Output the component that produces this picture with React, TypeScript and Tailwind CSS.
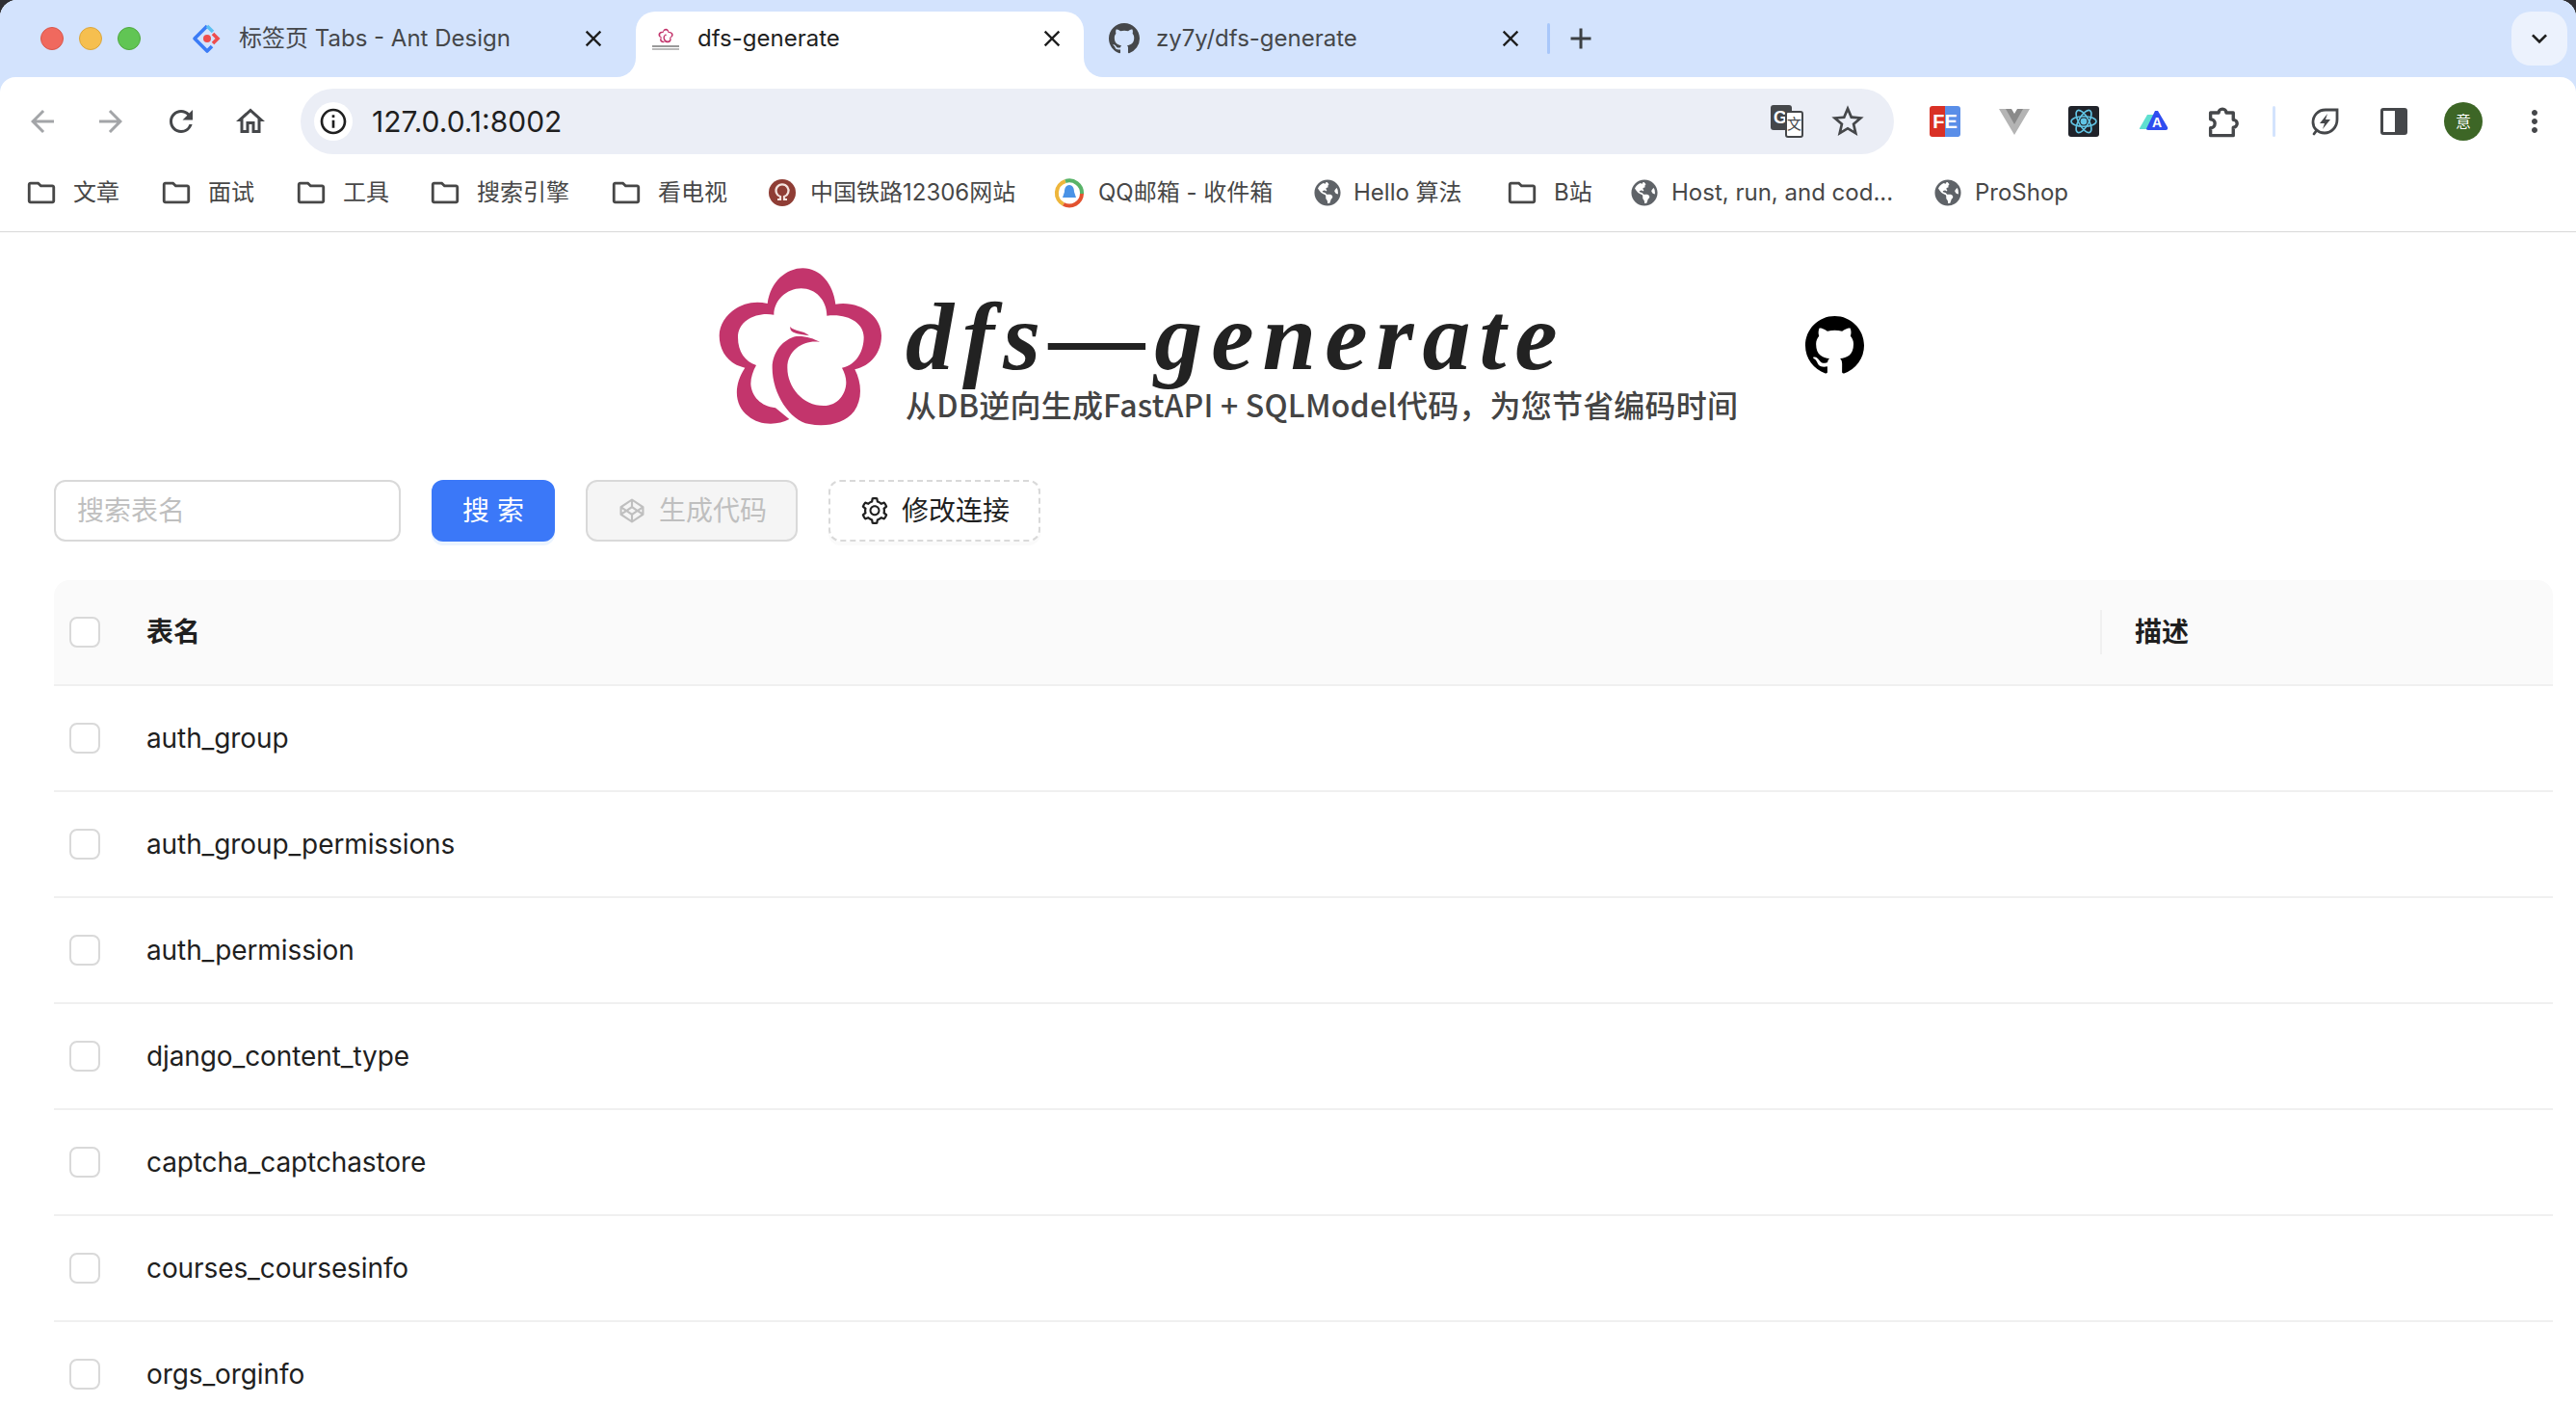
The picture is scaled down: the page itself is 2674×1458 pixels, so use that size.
import { AiOutlineCodepen, AiOutlineSetting } from 'react-icons/ai'
import { FaGlobeAmericas } from 'react-icons/fa'
import {
  MdAdd,
  MdArrowBack,
  MdArrowForward,
  MdClose,
  MdInfoOutline,
  MdKeyboardArrowDown,
  MdMoreVert,
  MdOutlineFolder,
  MdOutlineHome,
  MdRefresh,
  MdStarBorder,
} from 'react-icons/md'

const SANS = 'font-["Inter","Noto_Sans_CJK_SC",sans-serif]'

const TABLES = [
  'auth_group',
  'auth_group_permissions',
  'auth_permission',
  'django_content_type',
  'captcha_captchastore',
  'courses_coursesinfo',
  'orgs_orginfo',
]

function Flower({ className }: { className?: string }) {
  return (
    <svg viewBox="0 0 600 570" className={className}>
      <path
        fill="#c3356c"
        d="M268 510C230 530 175 530 140 500C100 470 90 410 130 350C80 340 50 300 50 250C50 190 120 130 200 150C210 80 260 40 310 40C365 40 405 90 412 152C490 140 555 190 555 250C555 305 520 345 472 355C495 400 495 450 470 485C440 525 380 535 330 525C270 515 215 430 215 350C215 300 250 260 290 252C315 250 345 258 363 270C320 262 262 290 262 350C262 410 310 468 375 468C420 468 445 430 445 395C445 380 440 365 432 350C480 340 500 295 500 255C500 210 450 180 385 188C385 140 350 103 305 103C260 103 220 140 220 185C170 175 108 200 108 255C108 300 130 330 165 342C155 360 148 380 148 400C150 440 180 470 225 475Z"
      />
      <path fill="#c3356c" d="M270 222C285 238 310 232 330 250C300 245 280 245 272 232Z" />
    </svg>
  )
}

function GithubMark({ className }: { className?: string }) {
  return (
    <svg viewBox="0 0 16 16" className={className} fill="currentColor">
      <path d="M8 0C3.58 0 0 3.58 0 8c0 3.54 2.29 6.53 5.47 7.59.4.07.55-.17.55-.38 0-.19-.01-.82-.01-1.49-2.01.37-2.53-.49-2.69-.94-.09-.23-.48-.94-.82-1.13-.28-.15-.68-.52-.01-.53.63-.01 1.08.58 1.23.82.72 1.21 1.87.87 2.33.66.07-.52.28-.87.51-1.07-1.78-.2-3.64-.89-3.64-3.95 0-.87.31-1.59.82-2.15-.08-.2-.36-1.02.08-2.12 0 0 .67-.21 2.2.82.64-.18 1.32-.27 2-.27.68 0 1.36.09 2 .27 1.53-1.04 2.2-.82 2.2-.82.44 1.1.16 1.92.08 2.12.51.56.82 1.27.82 2.15 0 3.07-1.87 3.75-3.65 3.95.29.25.54.73.54 1.48 0 1.07-.01 1.93-.01 2.2 0 .21.15.46.55.38A8.013 8.013 0 0016 8c0-4.42-3.58-8-8-8z" />
    </svg>
  )
}

function AntLogo() {
  return (
    <svg viewBox="0 0 32 32" className="size-8 shrink-0" fill="none">
      <path d="M16 3L3 16l13 13 5-5" stroke="#3b7cf6" strokeWidth="3.6" strokeLinejoin="round" />
      <path d="M16 3l6 6" stroke="#5cc0f2" strokeWidth="3.6" />
      <path d="M22 11l5 5-5 5" stroke="#ee4d4d" strokeWidth="3.6" />
      <circle cx="16" cy="16" r="4" fill="#ee4d4d" />
    </svg>
  )
}

function Tab({
  icon,
  title,
  box,
  active,
}: {
  icon: React.ReactNode
  title: string
  box: string
  active?: boolean
}) {
  return (
    <div
      className={`relative flex h-[68px] shrink-0 items-center pb-3 ${box} ${
        active ? 'rounded-t-[20px] bg-white text-[#1f1f1f]' : 'text-[#45474a]'
      }`}
    >
      {active && (
        <>
          <span className="absolute -left-5 bottom-0 size-5 bg-white">
            <span className="block size-5 rounded-br-[20px] bg-[#d3e3fd]" />
          </span>
          <span className="absolute -right-5 bottom-0 size-5 bg-white">
            <span className="block size-5 rounded-bl-[20px] bg-[#d3e3fd]" />
          </span>
        </>
      )}
      <span className="flex w-8 shrink-0 justify-center">{icon}</span>
      <span className="ml-[17px] min-w-0 flex-1 truncate text-[24px]">{title}</span>
      <MdClose className="size-7 shrink-0 text-[#1f1f1f]" />
    </div>
  )
}

function TabStrip() {
  return (
    <div className="flex h-20 items-end bg-[#d3e3fd]">
      <div className="flex h-20 w-[184px] shrink-0 items-center gap-4 pl-[42px]">
        <span className="size-6 rounded-full border border-[#d9574b] bg-[#f0695e]" />
        <span className="size-6 rounded-full border border-[#dba63c] bg-[#f6bf4f]" />
        <span className="size-6 rounded-full border border-[#4fa83e] bg-[#61c554]" />
      </div>
      <Tab icon={<AntLogo />} title="标签页 Tabs - Ant Design" box="w-[476px] pl-[15px] pr-[30px]" />
      <Tab
        active
        icon={
          <span className="flex flex-col items-center">
            <Flower className="size-[18px]" />
            <span className="mt-px h-[2px] w-7 bg-[#999]" />
            <span className="mt-px h-[2px] w-7 bg-[#bbb]" />
          </span>
        }
        title="dfs-generate"
        box="w-[465px] pl-[15px] pr-[19px]"
      />
      <Tab icon={<GithubMark className="size-8" />} title="zy7y/dfs-generate" box="w-[475px] pl-[26px] pr-[18px]" />
      <div className="flex h-20 flex-1 items-center pl-[6px]">
        <span className="h-[32px] w-[3px] rounded bg-[#a8c7fa]" />
        <MdAdd className="ml-[14px] size-9 text-[#3c4043]" />
        <span className="ml-auto mr-[9px] flex h-14 w-[58px] items-center justify-center rounded-[20px] bg-[#ecf2fd]">
          <MdKeyboardArrowDown className="size-8 text-[#1f1f1f]" />
        </span>
      </div>
    </div>
  )
}

function ExtensionIcons() {
  return (
    <div className="flex items-center">
      <span className="flex size-8 items-center justify-center rounded-[3px] bg-[linear-gradient(90deg,#d93025_50%,#5a8ee8_50%)] font-['Liberation_Sans',sans-serif] text-[20px] font-bold leading-none text-white">
        FE
      </span>
      <svg viewBox="0 0 32 28" className="ml-10 size-8">
        <path fill="#b4b4b4" d="M0 1h12l4 7 4-7h12L16 28z" />
        <path fill="#8a8a8a" d="M7 1h6l3 5 3-5h6L16 17z" />
      </svg>
      <span className="ml-10 flex size-8 items-center justify-center rounded-[3px] bg-[#20232a]">
        <svg viewBox="0 0 32 32" className="size-8" fill="none" stroke="#61c4e4" strokeWidth="1.6">
          <ellipse cx="16" cy="16" rx="13" ry="5.2" />
          <ellipse cx="16" cy="16" rx="13" ry="5.2" transform="rotate(60 16 16)" />
          <ellipse cx="16" cy="16" rx="13" ry="5.2" transform="rotate(120 16 16)" />
          <circle cx="16" cy="16" r="2.6" fill="#61c4e4" />
        </svg>
      </span>
      <svg viewBox="0 0 32 32" className="ml-10 size-8">
        <path fill="#5fdfd0" d="M2 23 10 9h7v15H5C2 24 1.500 24 2 23z" />
        <path fill="#2f4df0" d="M18 5h3l10 17c.7 1.500 0 3-2 3H11C9 25 8.500 24 9.500 22.500z" />
        <text x="20" y="22" fontSize="14" fontWeight="700" fill="#fff" textAnchor="middle" fontFamily="Liberation Sans">
          A
        </text>
      </svg>
      <svg viewBox="0 0 32 32" className="ml-[38px] size-9" fill="none" stroke="#45474a" strokeWidth="3" strokeLinejoin="round">
        <path d="M5 8h7.500a3.500 3.500 0 0 1 7 0H26v6.500a3.500 3.500 0 0 1 0 7V29H5v-7a4 4 0 0 0 0-8z" />
      </svg>
      <span className="ml-[34px] h-8 w-[3px] rounded bg-[#d3e3fd]" />
      <svg viewBox="0 0 32 32" className="ml-9 size-8" fill="none" stroke="#45474a" strokeWidth="2.8" strokeLinecap="round">
        <path d="M28 4H16C8 4 3 10 3 17C3 23 8 28 15 28C22 28 28 22 28 14Z" />
        <path d="M7 25L4 29" />
        <path d="M18 8L10 18H15L13 24L21 14H16Z" fill="#45474a" stroke="none" />
      </svg>
      <span className="ml-[41px] flex h-7 w-7 overflow-hidden rounded-[3px] border-[3px] border-[#45474a] bg-white">
        <span className="ml-auto w-[10px] bg-[#45474a]" />
      </span>
      <span className="ml-[38px] flex size-10 items-center justify-center rounded-full bg-[#3d6626] text-[16px] text-white">
        意
      </span>
      <MdMoreVert className="ml-9 size-9 text-[#45474a]" />
    </div>
  )
}

function Toolbar() {
  return (
    <div className="flex h-20 items-center rounded-t-[16px] bg-white pl-[26px] pt-3">
      <MdArrowBack className="size-9 text-[#a3a5a8]" />
      <MdArrowForward className="ml-[35px] size-9 text-[#a3a5a8]" />
      <MdRefresh className="ml-[37px] size-9 text-[#45474a]" />
      <MdOutlineHome className="ml-[36px] size-9 text-[#45474a]" />
      <div className="ml-[34px] flex h-[68px] w-[1654px] items-center rounded-full bg-[#ebeef6] pl-[14px] pr-7">
        <span className="flex size-10 items-center justify-center rounded-full bg-white">
          <MdInfoOutline className="size-8 text-[#1f1f1f]" />
        </span>
        <span className="ml-[20px] text-[30px] text-[#1f1f1f]">127.0.0.1:8002</span>
        <svg viewBox="0 0 36 36" className="ml-auto size-9">
          <rect x="1" y="1" width="22" height="26" rx="3" fill="#45474a" />
          <text x="11" y="20" fontSize="18" fontWeight="700" fill="#fff" textAnchor="middle" fontFamily="Liberation Sans">
            G
          </text>
          <rect x="17" y="8" width="17" height="26" rx="2" fill="#fff" stroke="#45474a" strokeWidth="2" />
          <text x="25.500" y="26" fontSize="15" fill="#45474a" textAnchor="middle" fontFamily="Noto Sans CJK SC">
            文
          </text>
        </svg>
        <MdStarBorder className="ml-[25px] size-10 text-[#45474a]" />
      </div>
      <div className="ml-[37px]">
        <ExtensionIcons />
      </div>
    </div>
  )
}

function Bookmark({
  icon,
  label,
  box,
}: {
  icon: React.ReactNode
  label: string
  box: string
}) {
  return (
    <div className={`flex shrink-0 items-center ${box}`}>
      <span className="flex w-[34px] shrink-0 justify-center">{icon}</span>
      <span className="whitespace-nowrap text-[24px] text-[#474747]">{label}</span>
    </div>
  )
}

function BookmarksBar() {
  const folder = <MdOutlineFolder className="size-10 text-[#474747]" />
  const globe = <FaGlobeAmericas className="size-[28px] text-[#5f6368]" />
  return (
    <div className="flex h-[81px] items-center border-b border-[#d8d8d8] bg-white pl-[26px]">
      <Bookmark icon={folder} label="文章" box="w-[140px] gap-4" />
      <Bookmark icon={folder} label="面试" box="w-[140px] gap-4" />
      <Bookmark icon={folder} label="工具" box="w-[139px] gap-4" />
      <Bookmark icon={folder} label="搜索引擎" box="w-[188px] gap-4" />
      <Bookmark icon={folder} label="看电视" box="w-[162px] gap-4" />
      <Bookmark
        icon={
          <svg viewBox="0 0 28 28" className="size-7">
            <circle cx="14" cy="14" r="14" fill="#8f3d35" />
            <path d="M9 21h3v-3a6.500 6.500 0 1 1 4 0v3h3" fill="none" stroke="#f4e3df" strokeWidth="2.2" />
          </svg>
        }
        label="中国铁路12306网站"
        box="w-[298px] gap-3"
      />
      <Bookmark
        icon={
          <svg viewBox="0 0 32 32" className="size-8" fill="none" strokeWidth="4">
            <path d="M10 28A13 13 0 0 1 12 4" stroke="#eeb63c" />
            <path d="M12 4A13 13 0 0 1 29 17" stroke="#58b368" />
            <path d="M29 17A13 13 0 0 1 10 28" stroke="#e2522f" />
            <path d="M16 8c4 0 5 4 5 7l2 6h-14l2-6c0-3 1-7 5-7z" fill="#4a93e6" stroke="none" />
          </svg>
        }
        label="QQ邮箱 - 收件箱"
        box="w-[268px] gap-[13px]"
      />
      <Bookmark icon={globe} label="Hello 算法" box="w-[202px] gap-[10px]" />
      <Bookmark icon={folder} label="B站" box="w-[127px] gap-4" />
      <Bookmark icon={globe} label="Host, run, and cod..." box="w-[315px] gap-[11px]" />
      <Bookmark icon={globe} label="ProShop" box="w-[160px] gap-[11px]" />
    </div>
  )
}

function Hero() {
  return (
    <div className="flex h-[257px] items-start pl-[730px] pt-6">
      <Flower className="h-[190px] w-[200px] shrink-0" />
      <div className="ml-[10px] flex w-[865px] shrink-0 flex-col">
        <span className="mt-[35px] h-[99px] font-['Liberation_Serif',serif] text-[100px] font-bold italic leading-[100px] tracking-[9px] text-[#222]">
          dfs—generate
        </span>
        <span className="whitespace-nowrap font-['Noto_Sans_CJK_SC',sans-serif] text-[32px] font-medium leading-[40px] tracking-[0.2px] text-[#444]">
          从DB逆向生成FastAPI + SQLModel代码，为您节省编码时间
        </span>
      </div>
      <GithubMark className="ml-[69px] mt-[63px] size-[61px] shrink-0 text-black" />
    </div>
  )
}

function Actions() {
  return (
    <div className="flex h-16 items-stretch text-[28px]">
      <div className="flex w-[360px] items-center rounded-[12px] border-2 border-[#d9d9d9] bg-white px-[22px] text-[#bfbfbf]">
        搜索表名
      </div>
      <button className="ml-8 w-[128px] rounded-[12px] bg-[#3b78f8] text-white shadow-[0_4px_0_#ebf4ff]">
        搜 索
      </button>
      <button className="ml-8 flex w-[220px] items-center justify-center gap-3 rounded-[12px] border-2 border-[#d9d9d9] bg-[#f5f5f5] text-[#bfbfbf]">
        <AiOutlineCodepen className="size-8" />
        生成代码
      </button>
      <button className="ml-8 flex w-[220px] items-center justify-center gap-3 rounded-[12px] border-2 border-dashed border-[#d9d9d9] bg-white text-[#1f1f1f] shadow-[0_4px_0_rgba(0,0,0,0.02)]">
        <AiOutlineSetting className="size-8" />
        修改连接
      </button>
    </div>
  )
}

function Checkbox() {
  return <span className="block size-8 shrink-0 rounded-[8px] border-2 border-[#d9d9d9] bg-white" />
}

function TableList() {
  return (
    <div className="mt-[40px] text-[28px] text-[#1f1f1f]">
      <div className="flex h-[110px] items-center rounded-t-[16px] border-b-2 border-[#f0f0f0] bg-[#fafafa] font-semibold">
        <span className="w-[96px] shrink-0 pl-4">
          <Checkbox />
        </span>
        <span className="w-[2028px]">表名</span>
        <span className="h-[46px] w-[2px] bg-[#f0f0f0]" />
        <span className="ml-[34px]">描述</span>
      </div>
      {TABLES.map((name) => (
        <div key={name} className="flex h-[110px] shrink-0 items-center border-b-2 border-[#f0f0f0]">
          <span className="w-[96px] shrink-0 pl-4">
            <Checkbox />
          </span>
          <span className="tracking-[-0.1px]">{name}</span>
        </div>
      ))}
    </div>
  )
}

function App() {
  return (
    <div className={`h-screen overflow-hidden bg-[#2f2f33] ${SANS}`}>
      <div className="h-full overflow-hidden rounded-t-[18px] bg-white">
        <div className="bg-[#d3e3fd]">
          <TabStrip />
          <Toolbar />
        </div>
        <BookmarksBar />
        <Hero />
        <main className="px-[56px] pr-6">
          <Actions />
          <TableList />
        </main>
      </div>
    </div>
  )
}

export default App
